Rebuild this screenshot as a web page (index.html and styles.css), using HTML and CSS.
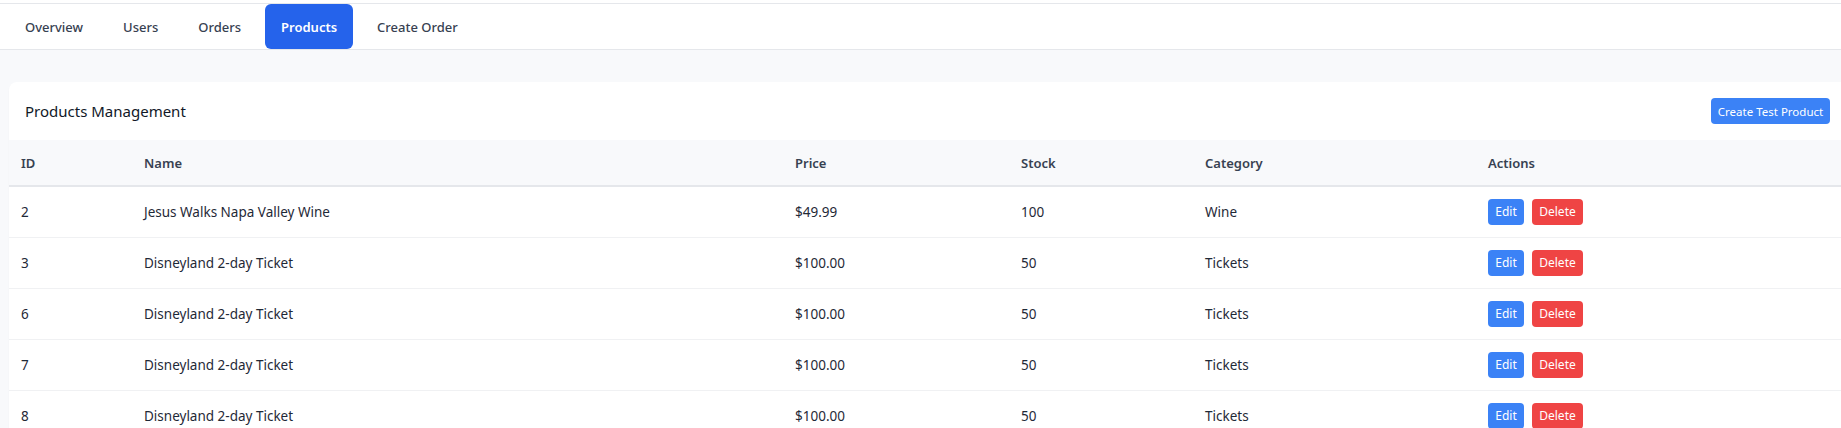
FILE: index.html
```html
<!DOCTYPE html>
<html lang="en">
<head>
<meta charset="utf-8">
<title>Products</title>
<link rel="stylesheet" href="styles.css">
</head>
<body>
<div class="top">
  <nav class="tabs">
    <a class="tab">Overview</a>
    <a class="tab">Users</a>
    <a class="tab">Orders</a>
    <a class="tab active">Products</a>
    <a class="tab">Create Order</a>
  </nav>
</div>
<main class="main">
  <section class="card">
    <div class="card-head">
      <h2 class="card-title">Products Management</h2>
      <button class="btn btn-blue btn-create">Create Test Product</button>
    </div>
    <table class="grid">
      <colgroup>
        <col class="c-id"><col class="c-name"><col class="c-price"><col class="c-stock"><col class="c-cat"><col>
      </colgroup>
      <thead>
        <tr><th>ID</th><th>Name</th><th>Price</th><th>Stock</th><th>Category</th><th>Actions</th></tr>
      </thead>
      <tbody>
        <tr><td>2</td><td>Jesus Walks Napa Valley Wine</td><td>$49.99</td><td>100</td><td>Wine</td><td><div class="acts"><button class="btn btn-blue">Edit</button><button class="btn btn-red">Delete</button></div></td></tr>
        <tr><td>3</td><td>Disneyland 2-day Ticket</td><td>$100.00</td><td>50</td><td>Tickets</td><td><div class="acts"><button class="btn btn-blue">Edit</button><button class="btn btn-red">Delete</button></div></td></tr>
        <tr><td>6</td><td>Disneyland 2-day Ticket</td><td>$100.00</td><td>50</td><td>Tickets</td><td><div class="acts"><button class="btn btn-blue">Edit</button><button class="btn btn-red">Delete</button></div></td></tr>
        <tr><td>7</td><td>Disneyland 2-day Ticket</td><td>$100.00</td><td>50</td><td>Tickets</td><td><div class="acts"><button class="btn btn-blue">Edit</button><button class="btn btn-red">Delete</button></div></td></tr>
        <tr><td>8</td><td>Disneyland 2-day Ticket</td><td>$100.00</td><td>50</td><td>Tickets</td><td><div class="acts"><button class="btn btn-blue">Edit</button><button class="btn btn-red">Delete</button></div></td></tr>
      </tbody>
    </table>
  </section>
</main>
</body>
</html>
```
FILE: styles.css
```css
* { box-sizing: border-box; }
html, body { margin: 0; padding: 0; overflow: hidden; }
body {
  background: #f8f9fb;
  font-family: "Noto Sans", "Open Sans", sans-serif;
  color: #1f2937;
}
.top {
  background: #fff;
  padding-top: 3px;
}
.tabs {
  display: flex;
  gap: 8px;
  padding: 0 9px;
  height: 47px;
  border-top: 1px solid #e5e7eb;
  border-bottom: 1px solid #e5e7eb;
  background: #fff;
}
.tab {
  display: flex;
  align-items: center;
  height: 45px;
  padding: 0 16px;
  font-size: 13px;
  font-weight: 500;
  color: #374151;
  border-radius: 6px;
}
.tab.active {
  background: #2563eb;
  color: #fff;
  font-weight: 600;
}
.main {
  padding: 32px 0 0 9px;
}
.card {
  background: #fff;
  border-radius: 8px 0 0 0;
  box-shadow: 0 1px 2px rgba(0,0,0,0.03);
}
.card-head {
  display: flex;
  align-items: center;
  justify-content: space-between;
  height: 58px;
  padding: 0 11px 0 16px;
}
.card-title {
  margin: 0;
  font-size: 15px;
  font-weight: 400;
  color: #111827;
}
.btn {
  border: 0;
  height: 26px;
  padding: 0 8px;
  border-radius: 4px;
  font-family: inherit;
  font-size: 12px;
  color: #fff;
}
.btn-blue { background: #3b82f6; }
.btn-red { background: #ef4444; }
.btn-create { width: 119px; padding: 0; font-size: 11.5px; }
.grid {
  width: 100%;
  border-collapse: collapse;
  table-layout: fixed;
  font-size: 13.5px;
}
.c-id { width: 123px; }
.c-name { width: 651px; }
.c-price { width: 226px; }
.c-stock { width: 184px; }
.c-cat { width: 283px; }
.grid th {
  background: #f8f9fb;
  height: 46px;
  padding: 0 12px;
  text-align: left;
  font-size: 13px;
  font-weight: 600;
  color: #374151;
  border-bottom: 2px solid #e5e7eb;
}
.grid td {
  height: 51px;
  padding: 0 12px;
  border-bottom: 1px solid #f0f1f3;
  color: #1f2937;
}
.acts {
  display: flex;
  gap: 8px;
}
.acts .btn-blue { width: 36px; padding: 0; }
.acts .btn-red { width: 51px; padding: 0; }
```
